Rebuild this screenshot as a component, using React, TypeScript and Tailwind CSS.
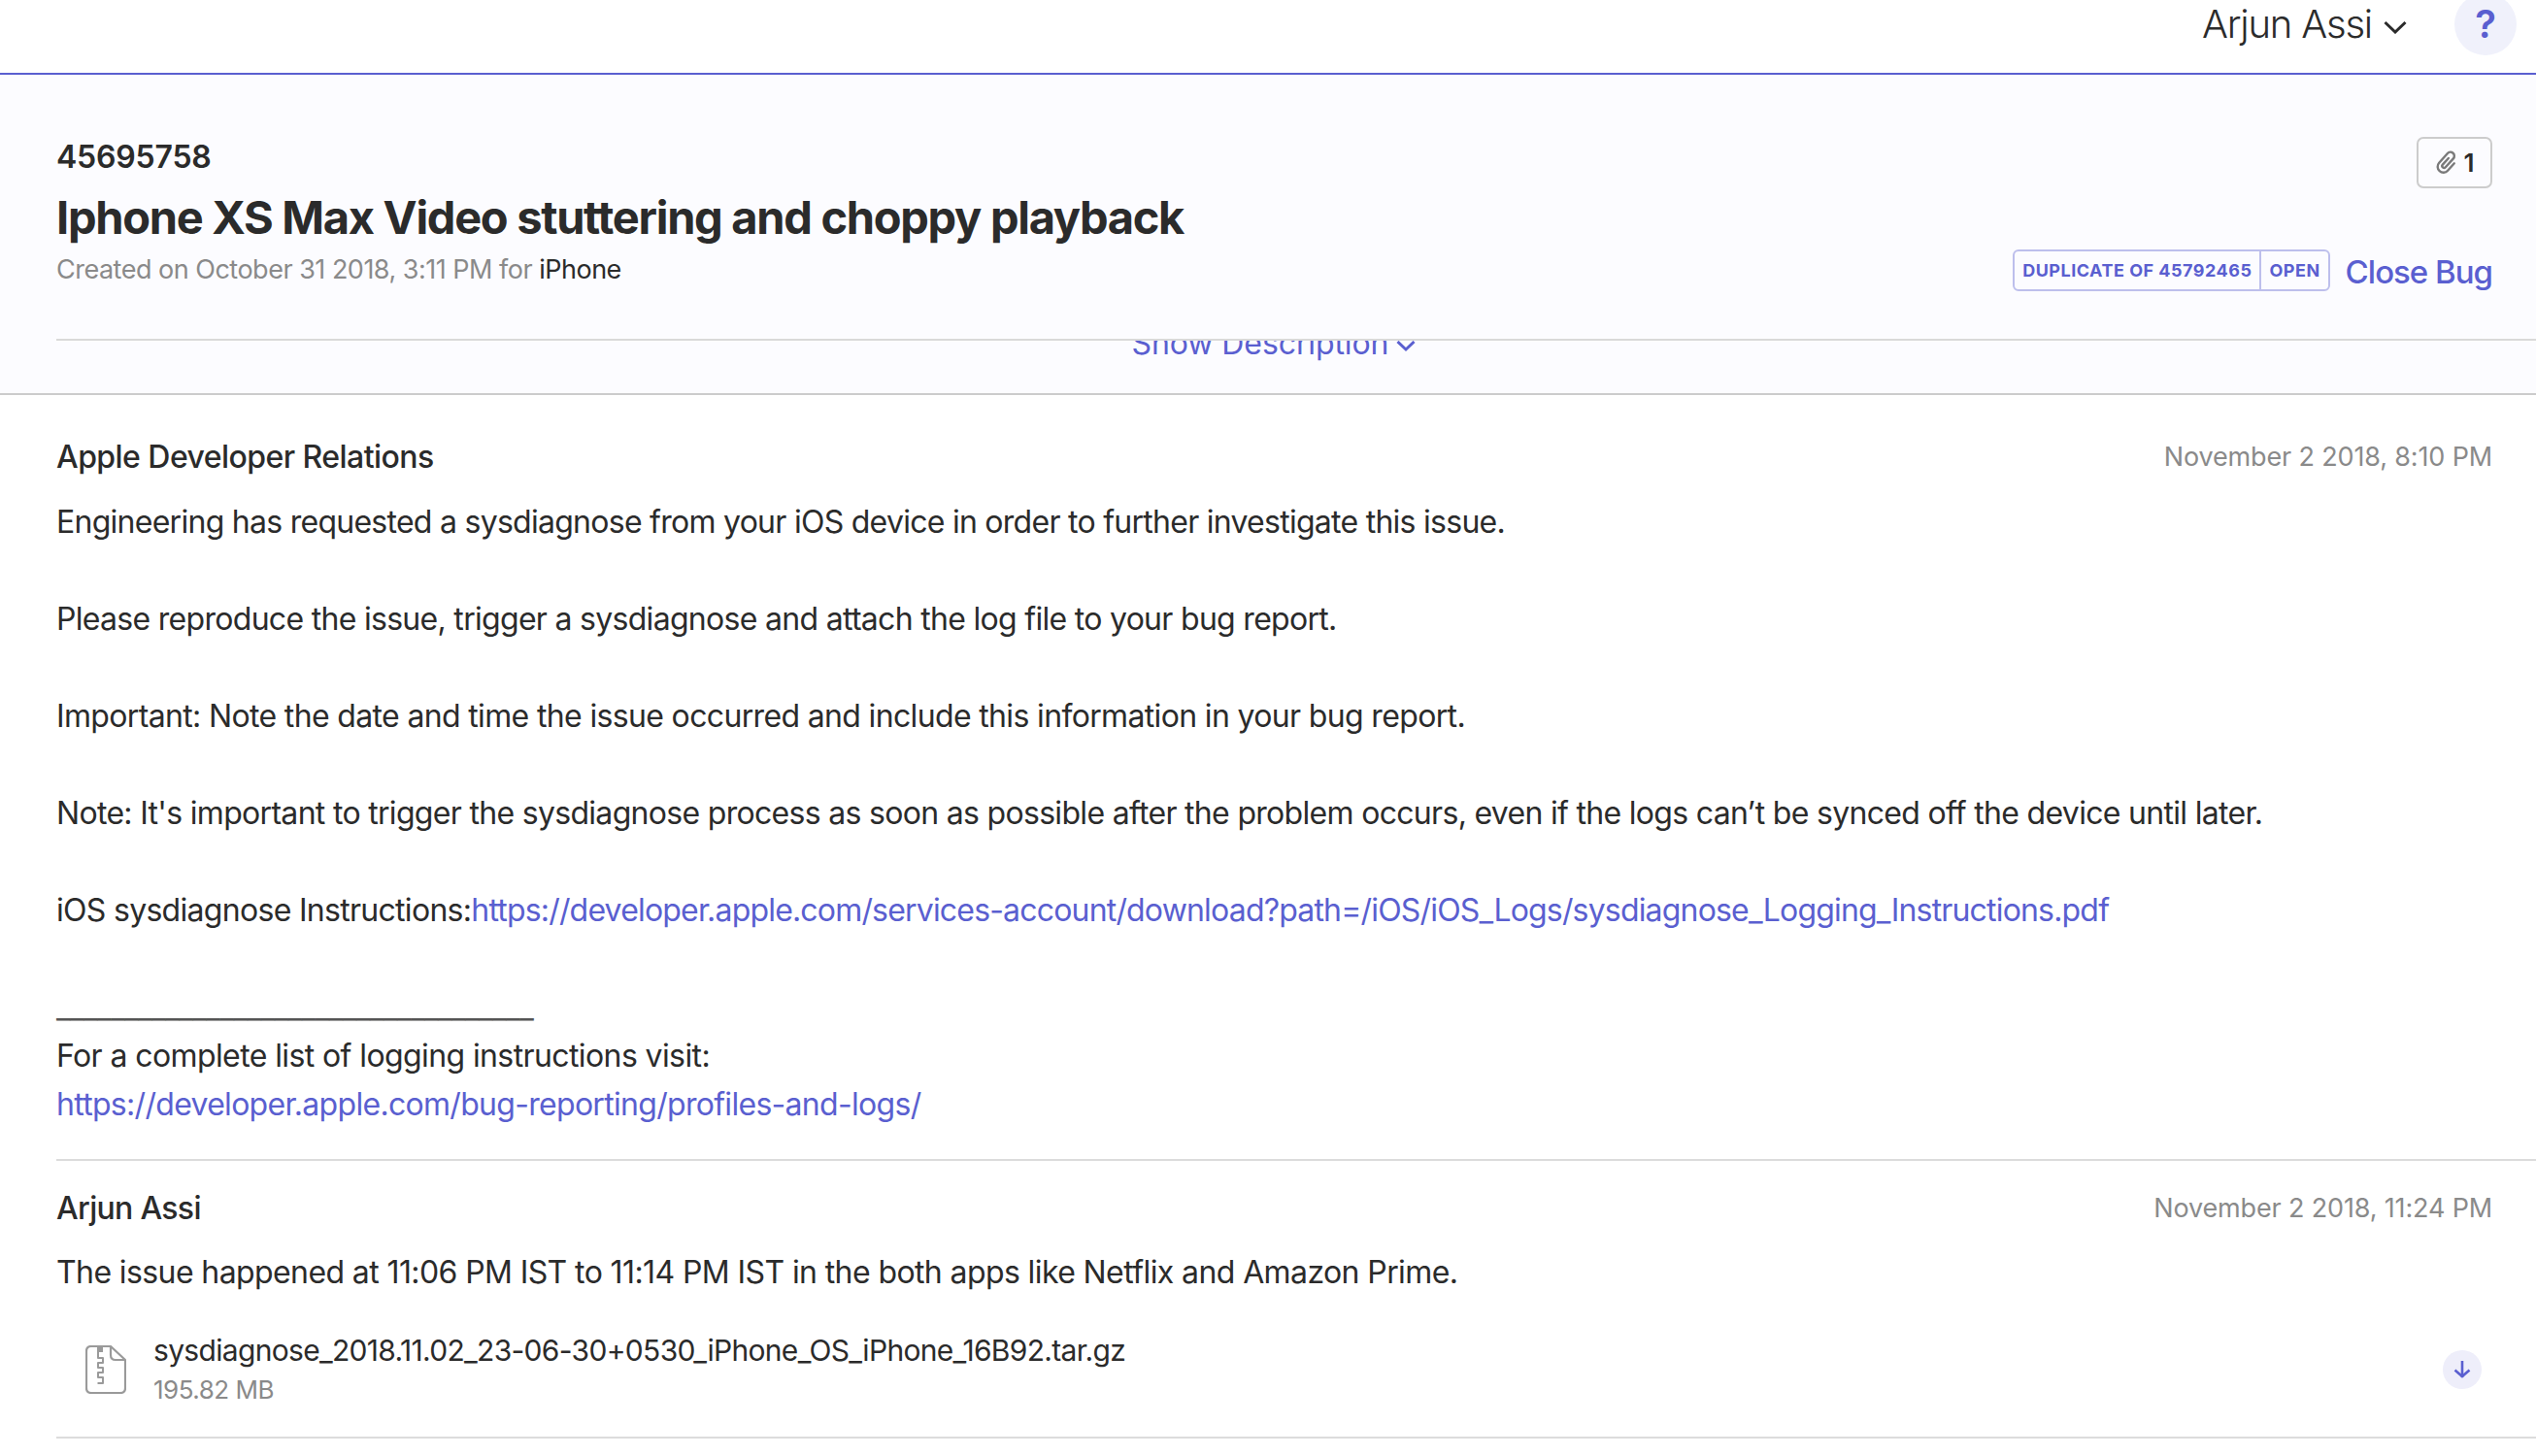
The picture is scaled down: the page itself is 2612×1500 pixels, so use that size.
export default function App() {
  const base = "text-[32px] leading-[50px] text-[#2b2b2b]";
  const body = "text-[32px] leading-[50px] text-[#2b2b2b] tracking-[-0.7px]";
  const link = "text-[#5a5fd0]";
  return (
    <div className="w-[2612px] h-[1500px] overflow-hidden bg-white font-['Inter',sans-serif] text-[#2b2b2b]">
      <header className="h-[77px] border-b-2 border-[#5a5fd0] flex justify-end items-start pr-[20px]">
        <div className="flex items-center h-[50px] text-[40px] font-light tracking-[-1.2px] text-[#2b2b2b]">
          Arjun Assi
          <svg className="ml-[12px] mt-[6px]" width="24" height="14" viewBox="0 0 24 14" fill="none" stroke="#2b2b2b" strokeWidth="3">
            <path d="M1.5 2 L12 12 L22.5 2" />
          </svg>
        </div>
        <div className="ml-[49px] -mt-[7px] w-[64px] h-[64px] rounded-full bg-[#f0f1fb] flex items-center justify-center text-[40px] font-semibold text-[#5a5fd0]">
          ?
        </div>
      </header>

      <section className="h-[330px] bg-[#fcfcff] border-b-2 border-[#cccccc]">
        <div className="h-[272px] pl-[58px] pr-[45px] flex justify-between">
          <div className="pt-[65px]">
            <div className="text-[32px] leading-[40px] font-semibold tracking-[-0.2px]">45695758</div>
            <h1 className="mt-[12px] text-[47px] leading-[60px] font-bold tracking-[-1.3px]">Iphone XS Max Video stuttering and choppy playback</h1>
            <div className="mt-[6px] text-[27px] leading-[36px] text-[#8a8a8a] tracking-[-0.5px]">
              Created on October 31 2018, 3:11 PM for <span className="text-[#2b2b2b]">iPhone</span>
            </div>
          </div>
          <div className="flex flex-col items-end pt-[64px]">
            <div className="w-[78px] h-[53px] border-2 border-[#cccccc] rounded-[7px] flex items-center justify-center gap-[6px] text-[26px] font-semibold">
              <svg className="mt-[1px]" width="24" height="26" viewBox="0 0 24 26" fill="none" stroke="#7a7a7a" strokeWidth="2.4" strokeLinecap="round" strokeLinejoin="round">
                <g transform="rotate(42 12 13)">
                  <path d="M10 8 V17 A2 2 0 0 0 14 17 V5 A4 4 0 0 0 6 5 V18 A6 6 0 0 0 18 18 V8" />
                </g>
              </svg>
              1
            </div>
            <div className="mt-[62px] flex items-center">
              <div className="h-[43px] border-2 border-[#bdbfec] rounded-[6px] flex items-stretch text-[18px] leading-[39px] font-bold text-[#5a5fd0] tracking-[0.5px] mr-[16px]">
                <span className="px-[8px] border-r-2 border-[#bdbfec]">DUPLICATE OF 45792465</span>
                <span className="px-[8px]">OPEN</span>
              </div>
              <span className="text-[33px] leading-[40px] font-medium text-[#5a5fd0] tracking-[-1px] mt-[4px]">Close Bug</span>
            </div>
          </div>
        </div>
        <div className="ml-[58px] border-t-2 border-[#d9d9d9] h-[56px] overflow-hidden">
          <div className="-ml-[58px] -mt-[17px] pl-[12px] flex items-center justify-center text-[32px] leading-[40px] font-normal text-[#5a5fd0] tracking-[-0.1px]">
            Show Description
            <svg className="ml-[8px] mt-[4px]" width="20" height="13" viewBox="0 0 20 13" fill="none" stroke="#5a5fd0" strokeWidth="3">
              <path d="M1.5 2 L10 10 L18.5 2" />
            </svg>
          </div>
        </div>
      </section>

      <div className="pl-[58px]">
        <article className="border-b-2 border-[#dcdcdc] h-[789px]">
          <div className="pr-[45px] pt-[44px] h-[106px] flex justify-between items-start">
            <span className="text-[32px] leading-[40px] font-medium tracking-[-0.55px]">Apple Developer Relations</span>
            <span className="text-[27px] leading-[40px] text-[#8a8a8a] tracking-[-0.15px]">November 2 2018, 8:10 PM</span>
          </div>
          <div className={base}>
            <p className="tracking-[-0.73px]">Engineering has requested a sysdiagnose from your iOS device in order to further investigate this issue.</p>
            <p className="mt-[50px] tracking-[-0.7px]">Please reproduce the issue, trigger a sysdiagnose and attach the log file to your bug report.</p>
            <p className="mt-[50px] tracking-[-0.65px]">Important: Note the date and time the issue occurred and include this information in your bug report.</p>
            <p className="mt-[50px] tracking-[-0.69px]">Note: It's important to trigger the sysdiagnose process as soon as possible after the problem occurs, even if the logs can’t be synced off the device until later.</p>
            <p className="mt-[50px] tracking-[-0.7px]">iOS sysdiagnose Instructions:<span className="text-[#5a5fd0] tracking-[-0.82px]">https://developer.apple.com/services-account/download?path=/iOS/iOS_Logs/sysdiagnose_Logging_Instructions.pdf</span></p>
            <p className="mt-[50px] tracking-[-0.56px] text-[#555555]">___________________________________</p>
            <p className="tracking-[-0.6px]">For a complete list of logging instructions visit:</p>
            <p className="tracking-[-0.7px] text-[#5a5fd0]">https://developer.apple.com/bug-reporting/profiles-and-logs/</p>
          </div>
        </article>
        <article className="border-b-2 border-[#dcdcdc] h-[286px]">
          <div className="pr-[45px] pt-[29px] h-[91px] flex justify-between items-start">
            <span className="text-[32px] leading-[40px] font-medium tracking-[-0.7px]">Arjun Assi</span>
            <span className="text-[27px] leading-[40px] text-[#8a8a8a] tracking-[-0.15px]">November 2 2018, 11:24 PM</span>
          </div>
          <p className={`${base} tracking-[-0.6px] -mt-[1px]`}>The issue happened at 11:06 PM IST to 11:14 PM IST in the both apps like Netflix and Amazon Prime.</p>
          <div className="mt-[35px] pl-[30px] pr-[56px] flex items-center">
            <svg width="42" height="50" viewBox="0 0 42 50" fill="none" stroke="#9a9a9a" strokeWidth="2.2" strokeLinejoin="round">
              <path d="M6 1 H26 L41 15 V44 C41 47 39 49 36 49 H6 C3 49 1 47 1 44 V6 C1 3 3 1 6 1 Z" />
              <path d="M26 1 V10 C26 13 28 15 31 15 H41" />
              <rect x="12" y="1" width="6" height="6" fill="#9a9a9a" stroke="none" />
              <path d="M13 7 V13 H18 V18 H13 V23 H18 V28 H13 V33 H18 V39 H12.5" strokeWidth="2" />
            </svg>
            <div className="ml-[28px] flex-1">
              <div className="text-[30px] leading-[40px] tracking-[-0.68px]">sysdiagnose_2018.11.02_23-06-30+0530_iPhone_OS_iPhone_16B92.tar.gz</div>
              <div className="text-[26px] leading-[36px] mt-[3px] text-[#8a8a8a] tracking-[-0.5px]">195.82 MB</div>
            </div>
            <div className="w-[40px] h-[40px] rounded-full bg-[#eeeefa] flex items-center justify-center">
              <svg width="18" height="20" viewBox="0 0 18 20" fill="none" stroke="#5a5fd0" strokeWidth="2.6">
                <path d="M9 1 V18" />
                <path d="M1.5 10.5 L9 17 L16.5 10.5" />
              </svg>
            </div>
          </div>
        </article>
      </div>
    </div>
  );
}
